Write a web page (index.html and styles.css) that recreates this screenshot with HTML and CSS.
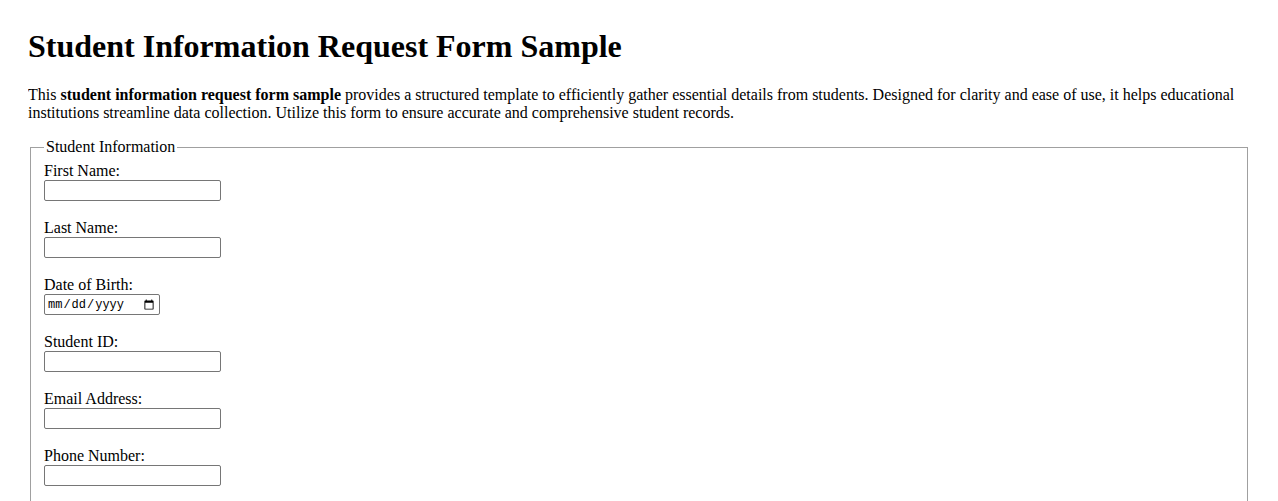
FILE: index.html
```html
<!DOCTYPE html>
<html lang="en">
<head>
<meta charset="utf-8">
<title>Student Information Request Form Sample</title>
<link rel="stylesheet" href="styles.css">
</head>
<body>
<h1 class="title">Student Information Request Form Sample</h1>
<p class="intro">This <strong>student information request form sample</strong> provides a structured template to efficiently gather essential details from students. Designed for clarity and ease of use, it helps educational institutions streamline data collection. Utilize this form to ensure accurate and comprehensive student records.</p>
<form class="form">
<fieldset class="group">
<legend class="group-title">Student Information</legend>
<label class="label" for="first">First Name:</label><br>
<input class="field" type="text" id="first"><br><br>
<label class="label" for="last">Last Name:</label><br>
<input class="field" type="text" id="last"><br><br>
<label class="label" for="dob">Date of Birth:</label><br>
<input class="field date" type="date" id="dob"><br><br>
<label class="label" for="sid">Student ID:</label><br>
<input class="field" type="text" id="sid"><br><br>
<label class="label" for="email">Email Address:</label><br>
<input class="field" type="email" id="email"><br><br>
<label class="label" for="phone">Phone Number:</label><br>
<input class="field" type="tel" id="phone"><br><br>
</fieldset>
</form>
</body>
</html>
```
FILE: styles.css
```css
html, body {
  background: #fff;
}
body {
  margin: 28px;
  font-family: "Liberation Serif", "Times New Roman", serif;
  font-size: 16px;
  color: #000;
}
.title {
  font-size: 32px;
  font-weight: bold;
  margin: 0 0 21px;
}
.intro {
  margin: 0 0 16px;
}
.group {
  margin: 0 2px;
  border: 1px solid #a0a0a0;
  padding: 6px 12px 10px 13px;
}
.group-title {
  padding: 0 2px;
}
.field {
  box-sizing: border-box;
  width: 177px;
  height: 21px;
  font-family: "Liberation Sans", Arial, sans-serif;
  font-size: 13.33px;
  border: 1px solid #767676;
  border-radius: 2px;
  padding: 1px 2px;
  margin: 0;
  vertical-align: bottom;
}
.date {
  width: 116px;
  font-family: "Liberation Mono", "DejaVu Sans Mono", monospace;
  font-size: 12px;
}
```
